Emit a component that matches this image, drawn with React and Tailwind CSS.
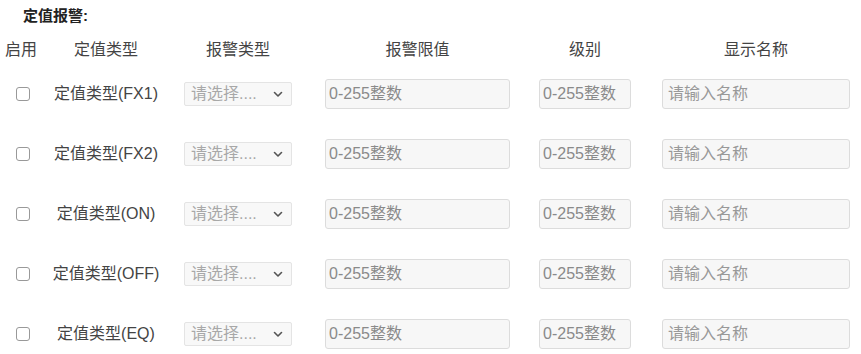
const rows = ["FX1", "FX2", "ON", "OFF", "EQ"];

const cols = "grid grid-cols-[46px_120px_18px_108px_33px_185px_29px_92px_31px_188px] items-center";

const Row = ({ code }) => (
    <div className={`${cols} h-[60px]`}>
        <div className="flex justify-center">
            <span className="h-[14px] w-[14px] rounded-[3px] border border-[#999] bg-white" />
        </div>
        <div className="text-center text-[#444]">定值类型({code})</div>
        <div />
        <div className="flex h-[24px] items-center justify-between rounded-[2px] border border-[#e4e4e4] bg-[#f8f8f8] pl-[6px] pr-[8px] text-[#a8a8a8]">
            <span>请选择....</span>
            <svg width="10" height="7" viewBox="0 0 10 7" fill="none">
                <path d="M1.5 1.5 L5 5 L8.5 1.5" stroke="#555" strokeWidth="1.6" strokeLinecap="round" strokeLinejoin="round" />
            </svg>
        </div>
        <div />
        <input
            className="h-[30px] w-full rounded-[3px] border border-[#dcdcdc] bg-[#f7f7f7] px-[3px] outline-none placeholder:text-[#8a8a8a]"
            placeholder="0-255整数"
        />
        <div />
        <input
            className="h-[30px] w-full rounded-[3px] border border-[#dcdcdc] bg-[#f7f7f7] px-[3px] outline-none placeholder:text-[#8a8a8a]"
            placeholder="0-255整数"
        />
        <div />
        <input
            className="h-[30px] w-full rounded-[3px] border border-[#dcdcdc] bg-[#f7f7f7] px-[5px] outline-none placeholder:text-[#999]"
            placeholder="请输入名称"
        />
    </div>
);

export default function App() {
    return (
        <div className="h-[354px] w-[861px] bg-white font-['Liberation_Sans','Noto_Sans_CJK_SC',sans-serif] text-[16px] text-[#444]">
            <div className="pl-[23px] pt-[6px] text-[15px] font-bold leading-[20px] text-[#222]">定值报警:</div>

            {/* column headings */}
            <div className={`${cols} mt-[12px] h-[24px] leading-[24px]`}>
                <div className="pl-[5px]">启用</div>
                <div className="text-center">定值类型</div>
                <div />
                <div className="text-center">报警类型</div>
                <div />
                <div className="text-center">报警限值</div>
                <div />
                <div className="text-center">级别</div>
                <div />
                <div className="text-center">显示名称</div>
            </div>

            <div className="mt-[2px]">
                {rows.map((r) => (
                    <Row key={r} code={r} />
                ))}
            </div>
        </div>
    );
}
